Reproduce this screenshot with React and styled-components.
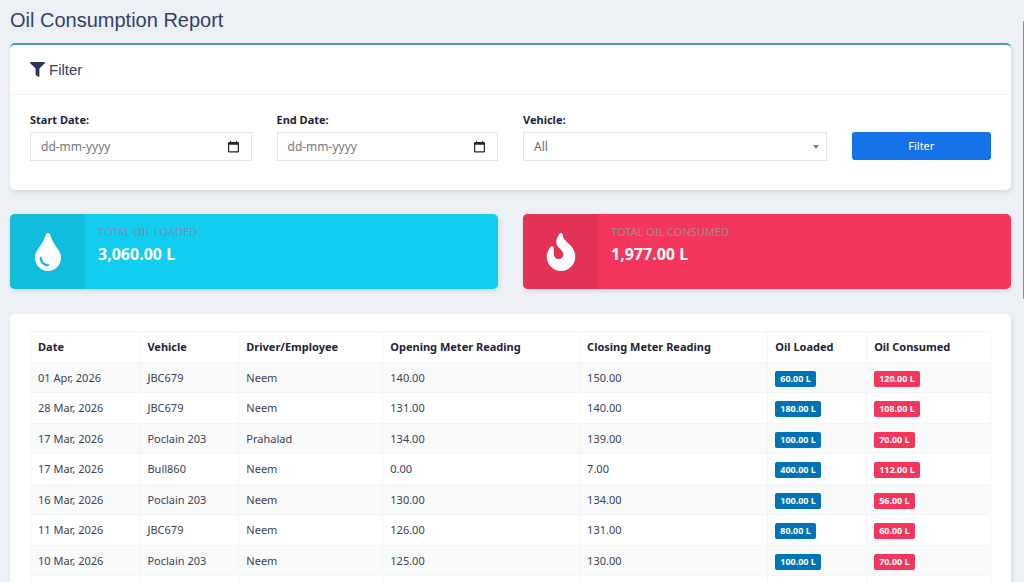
import React from "react";
import styled, { createGlobalStyle } from "styled-components";
import { FaFilter, FaTint, FaFire } from "react-icons/fa";

const GlobalStyle = createGlobalStyle`
  *, *::before, *::after { box-sizing: border-box; }
  body {
    margin: 0;
    background: #edf0f5;
    color: #3b4256;
    font-family: "Noto Sans", "Open Sans", sans-serif;
    font-size: 12px;
    line-height: 18px;
  }
  input, select, button { font: inherit; }
`;

const Page = styled.main`
  height: 100vh;
  overflow: hidden;
  padding: 7px 13px 0 10px;
`;

const PageTitle = styled.h1`
  margin: 0 0 10px;
  font: 400 20px/26px "Liberation Sans", Arial, sans-serif;
  color: #34406a;
`;

const Card = styled.section`
  background: #fff;
  border-radius: 5px;
  border-top: ${(p) => (p.$accent ? "2px solid #4a96c4" : "0")};
  box-shadow: 1px 2px 4px rgba(60, 75, 100, 0.14);
  margin-bottom: 24px;
`;

const CardHeader = styled.header`
  display: flex;
  align-items: center;
  gap: 4px;
  height: 50px;
  padding: 0 20px;
  border-bottom: 1px solid #f3f5f7;
  color: #2b3560;
`;

const CardTitle = styled.h2`
  margin: 0;
  font: 400 15px/20px "Liberation Sans", Arial, sans-serif;
  color: #34406a;
`;

const FilterForm = styled.form`
  display: grid;
  grid-template-columns: repeat(12, minmax(0, 1fr));
  column-gap: 25px;
  align-items: end;
  padding: 16px 20px 29px;
`;

const Field = styled.div`
  grid-column: span ${(p) => p.$span};
`;

const Label = styled.label`
  display: block;
  margin-bottom: 3px;
  font-size: 11px;
  font-weight: 700;
  color: #1f2338;
`;

const ControlFrame = styled.div`
  display: flex;
  align-items: center;
  height: 29px;
  padding: 0 12px 0 10px;
  border: 1px solid #e0e6eb;
  background: #fff;
  color: #23242c;
`;

const DateInput = styled.input`
  flex: 1;
  min-width: 0;
  padding: 0;
  border: 0;
  outline: 0;
  background: transparent;
  color: #6d6f74;
  &::placeholder { color: #77797d; opacity: 1; }
`;

const PickerButton = styled.button`
  display: flex;
  padding: 0;
  border: 0;
  background: transparent;
  color: inherit;
`;

const Select = styled.select`
  flex: 1;
  min-width: 0;
  padding: 0;
  border: 0;
  outline: 0;
  appearance: none;
  background: transparent;
  color: #6a6c73;
`;

const SelectFrame = styled(ControlFrame)`
  padding-right: 7px;
  color: #7b7d83;
`;

const SubmitButton = styled.button`
  width: 100%;
  height: 28px;
  margin-bottom: 1px;
  display: block;
  border: 0;
  border-radius: 3px;
  background: #1572e8;
  color: #fff;
  font-size: 11px;
`;

const Stats = styled.div`
  display: grid;
  grid-template-columns: 1fr 1fr;
  gap: 25px;
  margin-bottom: 25px;
`;

const StatCard = styled.article`
  display: flex;
  height: 75px;
  overflow: hidden;
  border-radius: 5px;
  background: ${(p) => p.$color};
  box-shadow: 1px 2px 4px rgba(60, 75, 100, 0.14);
`;

const StatIcon = styled.div`
  display: flex;
  flex: none;
  align-items: center;
  justify-content: center;
  width: 75px;
  background: ${(p) => p.$color};
  color: #fff;
`;

const StatBody = styled.div`
  padding: 9px 13px;
`;

const StatLabel = styled.div`
  font-size: 11px;
  text-transform: uppercase;
  color: ${(p) => p.$color};
`;

const StatValue = styled.div`
  font-size: 16px;
  line-height: 26px;
  font-weight: 700;
  color: #fff;
`;

const TableCard = styled(Card)`
  padding: 17px 20px;
`;

const Table = styled.table`
  width: 100%;
  border-collapse: collapse;
  table-layout: fixed;
`;

const HeadCell = styled.th`
  width: ${(p) => p.$width};
  height: 31px;
  padding: 0 7px;
  border: 1px solid #f3f5f6;
  text-align: left;
  font-size: 11px;
  font-weight: 700;
  color: #1f2338;
  white-space: nowrap;
`;

const Row = styled.tr`
  height: 31px;
  &:nth-child(odd) {
    height: 30px;
    background: #f9fafa;
  }
`;

const Cell = styled.td`
  padding: 0 7px;
  border: 1px solid #f3f5f6;
  font-size: 11px;
  white-space: nowrap;
`;

const Badge = styled.span`
  display: inline-block;
  padding: 0 5px;
  border-radius: 2px;
  background: ${(p) => p.$color};
  color: #fff;
  font-size: 9px;
  font-weight: 700;
  line-height: 16px;
  vertical-align: middle;
`;

const ScrollThumb = styled.div`
  position: fixed;
  top: 21px;
  right: 0;
  width: 1px;
  height: 278px;
  background: #8b8b90;
`;

const columns = [
  ["Date", "11.4%"],
  ["Vehicle", "10.3%"],
  ["Driver/Employee", "15%"],
  ["Opening Meter Reading", "20.5%"],
  ["Closing Meter Reading", "19.6%"],
  ["Oil Loaded", "10.3%"],
  ["Oil Consumed", "12.9%"],
];

const rows = [
  ["01 Apr, 2026", "JBC679", "Neem", "140.00", "150.00", "60.00 L", "120.00 L"],
  ["28 Mar, 2026", "JBC679", "Neem", "131.00", "140.00", "180.00 L", "108.00 L"],
  ["17 Mar, 2026", "Poclain 203", "Prahalad", "134.00", "139.00", "100.00 L", "70.00 L"],
  ["17 Mar, 2026", "Bull860", "Neem", "0.00", "7.00", "400.00 L", "112.00 L"],
  ["16 Mar, 2026", "Poclain 203", "Neem", "130.00", "134.00", "100.00 L", "56.00 L"],
  ["11 Mar, 2026", "JBC679", "Neem", "126.00", "131.00", "80.00 L", "60.00 L"],
  ["10 Mar, 2026", "Poclain 203", "Neem", "125.00", "130.00", "100.00 L", "70.00 L"],
  ["", "", "", "", "", "", ""],
];

const badgeColors = { 5: "#0073b7", 6: "#f5365c" };

function CalendarIcon() {
  return (
    <svg width="11" height="12" viewBox="0 0 11 12" aria-hidden="true">
      <path
        fill="currentColor"
        fillRule="evenodd"
        d="M2 0h1v1h5V0h1v1h1a1 1 0 0 1 1 1v8.500a1 1 0 0 1-1 1H1a1 1 0 0 1-1-1V2a1 1 0 0 1 1-1h1zM1.200 3.800v6.500h8.600V3.800z"
      />
    </svg>
  );
}

function DateField({ id, label }) {
  return (
    <Field $span={3}>
      <Label htmlFor={id}>{label}</Label>
      <ControlFrame>
        <DateInput id={id} name={id} type="text" placeholder="dd-mm-yyyy" />
        <PickerButton type="button" aria-label="Open calendar">
          <CalendarIcon />
        </PickerButton>
      </ControlFrame>
    </Field>
  );
}

function Stat({ color, iconColor, labelColor, icon, label, value }) {
  return (
    <StatCard $color={color}>
      <StatIcon $color={iconColor}>{icon}</StatIcon>
      <StatBody>
        <StatLabel $color={labelColor}>{label}</StatLabel>
        <StatValue>{value}</StatValue>
      </StatBody>
    </StatCard>
  );
}

export default function App() {
  return (
    <>
      <GlobalStyle />
      <Page>
        <PageTitle>Oil Consumption Report</PageTitle>

        <Card $accent>
          <CardHeader>
            <FaFilter size={15} aria-hidden="true" />
            <CardTitle>Filter</CardTitle>
          </CardHeader>
          <FilterForm onSubmit={(e) => e.preventDefault()}>
            <DateField id="start-date" label="Start Date:" />
            <DateField id="end-date" label="End Date:" />
            <Field $span={4}>
              <Label htmlFor="vehicle">Vehicle:</Label>
              <SelectFrame>
                <Select id="vehicle" name="vehicle">
                  <option>All</option>
                </Select>
                <svg width="6" height="4" viewBox="0 0 6 4" aria-hidden="true">
                  <path d="M0 0h6L3 4z" fill="currentColor" />
                </svg>
              </SelectFrame>
            </Field>
            <Field $span={2}>
              <SubmitButton type="submit">Filter</SubmitButton>
            </Field>
          </FilterForm>
        </Card>

        <Stats>
          <Stat
            color="#11cdef"
            iconColor="#10bddd"
            labelColor="#7590b4"
            icon={<FaTint size={38} aria-hidden="true" />}
            label="Total Oil Loaded"
            value="3,060.00 L"
          />
          <Stat
            color="#f5365c"
            iconColor="#e23256"
            labelColor="#a58a8c"
            icon={<FaFire size={38} aria-hidden="true" />}
            label="Total Oil Consumed"
            value="1,977.00 L"
          />
        </Stats>

        <TableCard>
          <Table>
            <thead>
              <tr>
                {columns.map(([name, width]) => (
                  <HeadCell key={name} scope="col" $width={width}>
                    {name}
                  </HeadCell>
                ))}
              </tr>
            </thead>
            <tbody>
              {rows.map((row, r) => (
                <Row key={r}>
                  {row.map((value, c) => (
                    <Cell key={c}>
                      {value && badgeColors[c] ? (
                        <Badge $color={badgeColors[c]}>{value}</Badge>
                      ) : (
                        value
                      )}
                    </Cell>
                  ))}
                </Row>
              ))}
            </tbody>
          </Table>
        </TableCard>
      </Page>
      <ScrollThumb />
    </>
  );
}
